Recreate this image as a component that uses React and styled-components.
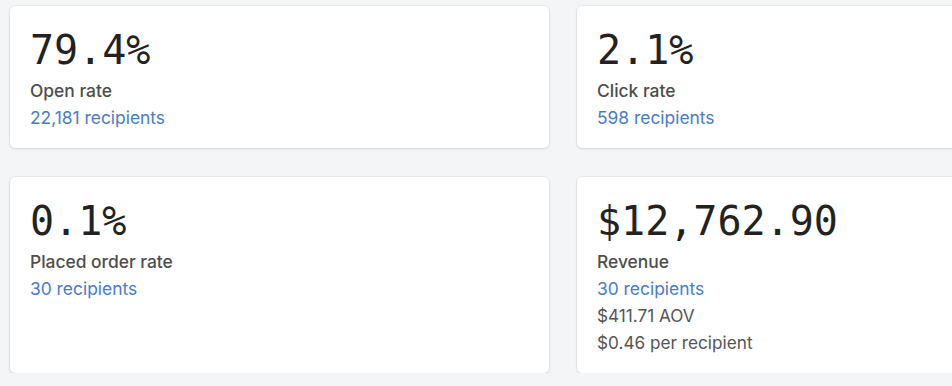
import React from "react";
import styled, { createGlobalStyle } from "styled-components";

const GlobalStyle = createGlobalStyle`
  html, body {
    margin: 0;
    padding: 0;
    background: #f4f5f7;
    overflow: hidden;
  }
`;

const Page = styled.div`
  display: grid;
  grid-template-columns: 539px 539px;
  column-gap: 28px;
  row-gap: 29px;
  padding: 6px 0 0 10px;
  width: 1200px;
  font-family: "Inter", "Liberation Sans", sans-serif;
`;

const Card = styled.div`
  background: #fff;
  border-radius: 5px;
  box-shadow: 0 0 0 1px rgba(0, 0, 0, 0.04), 0 1px 3px rgba(0, 0, 0, 0.1);
  padding: 20px;
  height: ${(props) => props.height}px;
  box-sizing: border-box;
`;

const BigNumber = styled.div`
  font-family: "DejaVu Sans Mono", "Liberation Mono", monospace;
  font-size: 40px;
  line-height: 48px;
  color: #222;
  margin-bottom: 3px;
`;

const Label = styled.div`
  font-size: 17.4px;
  line-height: 27px;
  font-weight: 500;
  color: #4d4d4d;
`;

const Recipients = styled.div`
  font-size: 17.4px;
  line-height: 27px;
  color: #4a7cc3;
`;

const Detail = styled.div`
  font-size: 17.2px;
  line-height: 27px;
  color: #555;
`;

const stats = [
  { value: "79.4%", label: "Open rate", recipients: "22,181 recipients", height: 142 },
  { value: "2.1%", label: "Click rate", recipients: "598 recipients", height: 142 },
  { value: "0.1%", label: "Placed order rate", recipients: "30 recipients", height: 196 },
  {
    value: "$12,762.90",
    label: "Revenue",
    recipients: "30 recipients",
    details: ["$411.71 AOV", "$0.46 per recipient"],
    height: 196,
  },
];

const App = () => {
  return (
    <>
      <GlobalStyle />
      <Page>
        {stats.map((s) => (
          <Card key={s.label} height={s.height}>
            <BigNumber>{s.value}</BigNumber>
            <Label>{s.label}</Label>
            <Recipients>{s.recipients}</Recipients>
            {s.details && s.details.map((d) => <Detail key={d}>{d}</Detail>)}
          </Card>
        ))}
      </Page>
    </>
  );
};

export default App;
